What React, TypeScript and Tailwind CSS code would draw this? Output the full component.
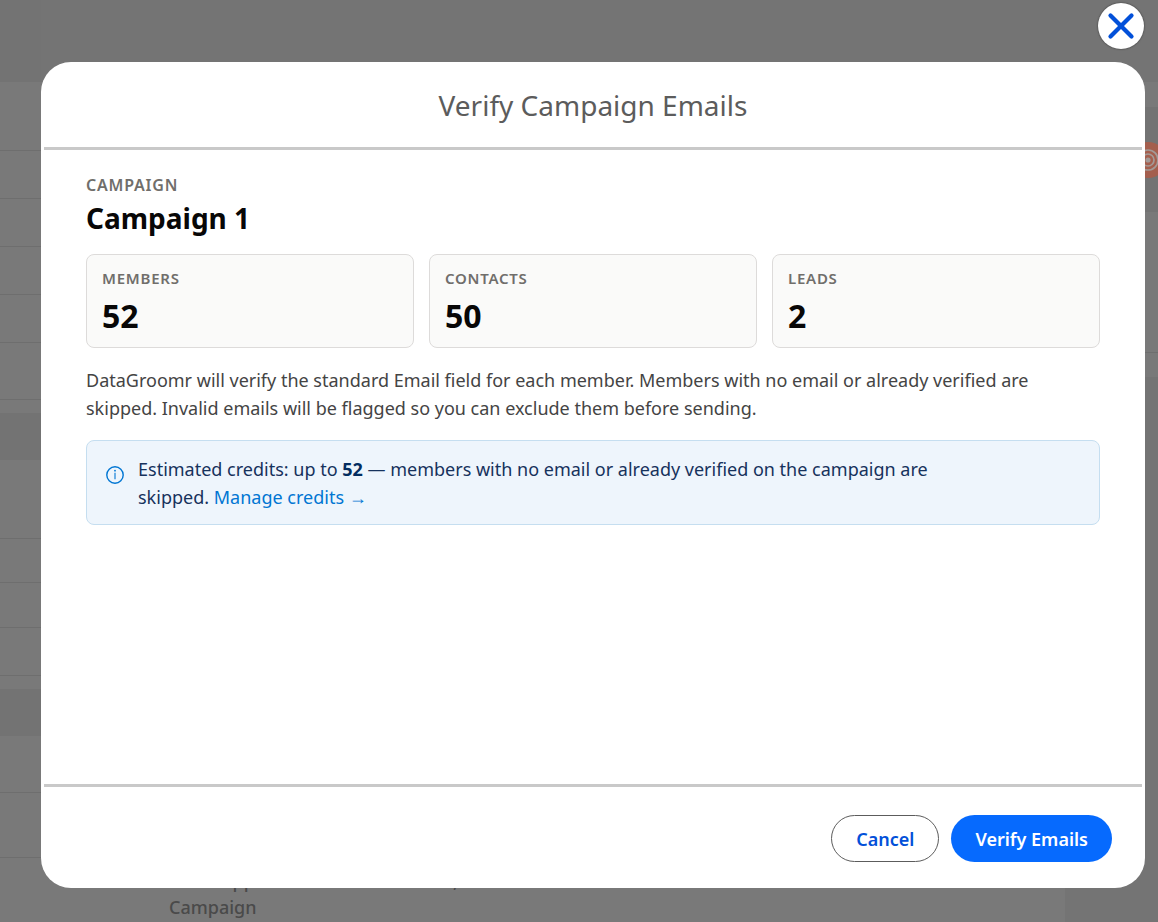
import { X } from "lucide-react";

interface Band {
  height: string;
  tone: string;
  line?: boolean;
}

const leftBands: Band[] = [
  { height: "h-[82px]", tone: "bg-[#737373]" },
  { height: "h-[69px]", tone: "bg-[#797979]", line: true },
  { height: "h-12", tone: "bg-[#797979]", line: true },
  { height: "h-12", tone: "bg-[#797979]", line: true },
  { height: "h-12", tone: "bg-[#797979]", line: true },
  { height: "h-12", tone: "bg-[#797979]", line: true },
  { height: "h-[57px]", tone: "bg-[#797979]", line: true },
  { height: "h-[13px]", tone: "bg-[#797979]" },
  { height: "h-[47px]", tone: "bg-[#737373]" },
  { height: "h-[79px]", tone: "bg-[#797979]", line: true },
  { height: "h-11", tone: "bg-[#797979]", line: true },
  { height: "h-[45px]", tone: "bg-[#797979]", line: true },
  { height: "h-12", tone: "bg-[#797979]", line: true },
  { height: "h-[13px]", tone: "bg-[#797979]" },
  { height: "h-[47px]", tone: "bg-[#737373]" },
  { height: "h-[57px]", tone: "bg-[#797979]", line: true },
  { height: "h-[65px]", tone: "bg-[#797979]", line: true },
];

const rightBands: Band[] = [
  { height: "h-[82px]", tone: "bg-[#747474]" },
  { height: "h-[25px]", tone: "bg-[#797979]" },
  { height: "h-[105px]", tone: "bg-[#737373]" },
  { height: "h-[141px]", tone: "bg-[#797979]", line: true },
  { height: "h-6", tone: "bg-[#797979]" },
];

const stats = [
  { label: "Members", value: 52 },
  { label: "Contacts", value: 50 },
  { label: "Leads", value: 2 },
];

function Bands({ bands }: { bands: Band[] }) {
  return (
    <>
      {bands.map((b, i) => (
        <div
          key={i}
          className={`shrink-0 ${b.height} ${b.tone} ${b.line ? "border-b border-[#6e6e6e]" : ""}`}
        />
      ))}
    </>
  );
}

function Backdrop() {
  return (
    <div className="flex h-screen flex-col overflow-hidden bg-[#797979]" aria-hidden="true">
      <div className="flex min-h-0 flex-1">
        <div className="flex w-[41px] shrink-0 flex-col">
          <Bands bands={leftBands} />
        </div>
        <div className="flex flex-1 flex-col">
          <div className="h-[82px] shrink-0 bg-[#747474]" />
          <div className="mt-auto flex pb-0.5 pl-32 text-lg leading-[26px] font-medium text-[#4a4a4a]">
            <p className="w-[284px]">
              Email App
              <br />
              Campaign
            </p>
            <p>,</p>
          </div>
        </div>
        <div className="flex w-[93px] shrink-0 flex-col bg-[#747474]">
          <Bands bands={rightBands} />
        </div>
      </div>
      <svg className="absolute top-[142px] right-[-8px]" width="36" height="36" viewBox="0 0 36 36">
        <circle cx="18" cy="18" r="18" fill="#a45f4e" />
        <g fill="none" stroke="#a39a97" strokeWidth="1.7">
          <circle cx="18" cy="18" r="10" />
          <circle cx="18" cy="18" r="6" />
        </g>
        <circle cx="18" cy="18" r="2.6" fill="#a39a97" />
      </svg>
    </div>
  );
}

function StatCard({ label, value }: { label: string; value: number }) {
  return (
    <div className="rounded-lg border border-[#dddbda] bg-[#fafaf9] px-[15px] pt-[11px] pb-[9px]">
      <p className="text-[15px] leading-6 font-semibold tracking-wider text-[#706e6b] uppercase">{label}</p>
      <p className="mt-1 text-[32px] leading-11 font-bold text-[#080707]">{value}</p>
    </div>
  );
}

function InfoIcon() {
  return (
    <svg className="mt-[11px] shrink-0" width="18" height="18" viewBox="0 0 18 18" fill="none">
      <circle cx="9" cy="9" r="8.2" stroke="#0176d3" strokeWidth="1.4" />
      <path d="M9 6.8v6.4" stroke="#0176d3" strokeWidth="1.1" />
      <circle cx="9" cy="4.7" r="0.9" fill="#0176d3" />
    </svg>
  );
}

export default function App() {
  return (
    <div className="relative overflow-hidden font-['Noto_Sans','Open_Sans',sans-serif]">
      <Backdrop />

      <div className="absolute inset-0 flex pt-[62px] pr-[13px] pb-[34px] pl-[41px]">
        <button
          type="button"
          aria-label="Close"
          className="absolute top-[3px] right-[14px] flex size-[46px] items-center justify-center rounded-full bg-white text-[#0250d9] shadow-[0_0_2px_rgba(0,0,0,0.6)]"
        >
          <X size={42} strokeWidth={2.4} />
        </button>

        <section
          role="dialog"
          aria-labelledby="dialog-title"
          className="flex flex-1 flex-col rounded-[30px] bg-white p-[3px]"
        >
          <header className="border-b-3 border-[#c9c9c9] pt-[19px] pb-[21px]">
            <h1 id="dialog-title" className="text-center text-[28px] leading-[42px] text-[#5c5c5c]">
              Verify Campaign Emails
            </h1>
          </header>

          <div className="flex-1 px-[42px] pt-[23px]">
            <p className="text-base leading-6 font-semibold tracking-wider text-[#706e6b] uppercase">Campaign</p>
            <h2 className="text-[28px] leading-[42px] font-bold text-[#080707]">Campaign 1</h2>

            <div className="mt-[15px] grid grid-cols-3 gap-[15px]">
              {stats.map((s) => (
                <StatCard key={s.label} label={s.label} value={s.value} />
              ))}
            </div>

            <p className="mt-[18px] text-lg leading-7 text-[#444444]">
              DataGroomr will verify the standard Email field for each member. Members with no email or already
              verified are skipped. Invalid emails will be flagged so you can exclude them before sending.
            </p>

            <div className="mt-[18px] flex gap-[14px] rounded-lg border border-[#c5def0] bg-[#eef5fc] px-[19px] pt-[14px] pb-[13px]">
              <InfoIcon />
              <p className="max-w-[840px] text-lg leading-7 text-[#16325c]">
                Estimated credits: up to <strong className="font-bold text-[#032d60]">52</strong> — members with no
                email or already verified on the campaign are skipped.{" "}
                <a href="#credits" className="text-[#0176d3]">
                  Manage credits →
                </a>
              </p>
            </div>
          </div>

          <footer className="flex justify-end gap-3 border-t-3 border-[#c9c9c9] pt-7 pr-[30px] pb-[23px]">
            <button
              type="button"
              className="h-[47px] rounded-full border border-[#5c5c5c] px-6 text-lg font-semibold text-[#0250d9]"
            >
              Cancel
            </button>
            <button type="button" className="h-[47px] rounded-full bg-[#066afe] px-6 text-lg font-semibold text-white">
              Verify Emails
            </button>
          </footer>
        </section>
      </div>
    </div>
  );
}
